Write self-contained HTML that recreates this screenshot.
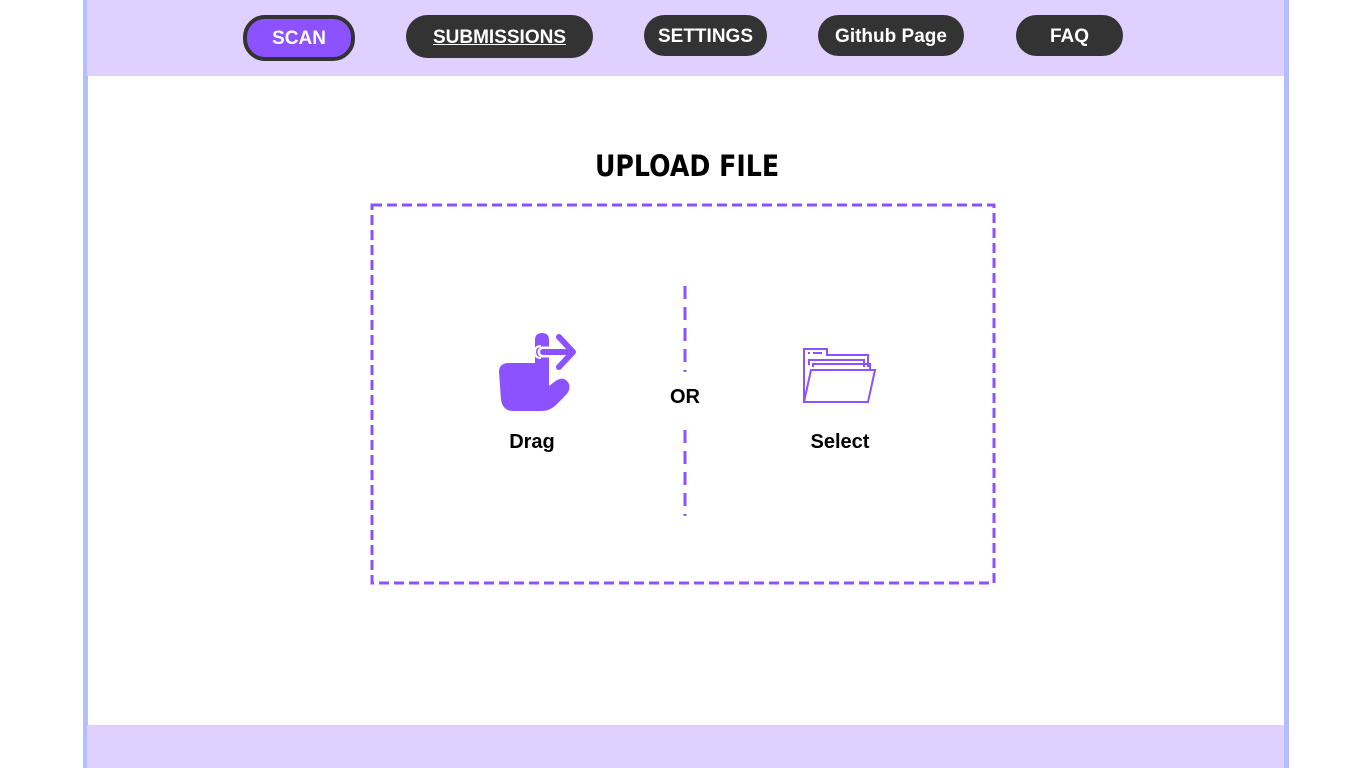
<!DOCTYPE html>
<html><head><style>
*{margin:0;padding:0;box-sizing:border-box}
body{width:1366px;height:768px;background:#fff;position:relative;overflow:hidden;font-family:"Liberation Sans",sans-serif}
.bl{position:absolute;top:0;height:768px;width:5px;background:#b3bdff}
.top{position:absolute;left:87px;width:1197px;top:0;height:76px;background:#e0d0ff}
.bot{position:absolute;left:87px;width:1197px;top:725px;height:43px;background:#e0d0ff}
.btn{position:absolute;background:#333;color:#fff;font-weight:bold;font-size:19px;border-radius:22px;display:flex;align-items:center;justify-content:center;padding-top:2px}
.t{position:absolute;font-weight:bold;font-size:20px;color:#000;text-align:center}
</style></head><body>
<div class="bl" style="left:83px"></div>
<div class="bl" style="left:1284px"></div>
<div class="top"></div>
<div class="bot"></div>
<div class="btn" style="left:243px;top:15px;width:112px;height:46px;background:#8c52ff;border:4px solid #333">SCAN</div>
<div class="btn" style="left:406px;top:15px;width:187px;height:43px;text-decoration:underline">SUBMISSIONS</div>
<div class="btn" style="left:644px;top:15px;width:123px;height:41px">SETTINGS</div>
<div class="btn" style="left:818px;top:15px;width:146px;height:41px">Github Page</div>
<div class="btn" style="left:1016px;top:15px;width:107px;height:41px">FAQ</div>
<div class="t" style="left:487px;top:149px;width:400px;font-size:29px;font-family:'DejaVu Sans',sans-serif;font-weight:600;transform:scaleX(0.87)">UPLOAD FILE</div>
<svg style="position:absolute;left:0;top:0" width="1366" height="768">
<rect x="372" y="205" width="622" height="378" fill="none" stroke="#8c52ff" stroke-width="3" stroke-dasharray="10 5"/>
<path d="M685 286 V372 M685 430 V516" stroke="#8c52ff" stroke-width="3" stroke-dasharray="13 8"/>
</svg>
<div class="t" style="left:645px;top:386px;width:80px">OR</div>
<div class="t" style="left:482px;top:431px;width:100px">Drag</div>
<div class="t" style="left:790px;top:431px;width:100px">Select</div>
<svg style="position:absolute;left:495px;top:330px" width="86" height="84" viewBox="0 0 86 84">
<path d="M40 10 Q40 3 47 3 Q54 3 54 10 V56 L62 50 Q70 46 74 54 Q76 60 70 66 L60 76 Q54 81 46 81 H18 Q8 81 6 70 L4 42 Q4 33 14 33 H40 Z" fill="#8c52ff"/>
<path d="M48 22 H76 M64 7 L78 22 L64 37" stroke="#fff" stroke-width="11" fill="none" stroke-linecap="round" stroke-linejoin="round"/>
<path d="M48 22 H76 M64 7 L78 22 L64 37" stroke="#8c52ff" stroke-width="6" fill="none" stroke-linecap="round" stroke-linejoin="round"/>
<path d="M46 16 Q40 16 40 22 Q40 28 46 28" stroke="#fff" stroke-width="2" fill="none"/>
</svg>
<svg style="position:absolute;left:800px;top:345px" width="80" height="62" viewBox="0 0 80 62">
<g fill="none" stroke="#8c52ff" stroke-width="2">
<path d="M4 57 V4 H27 V10 H68 V22"/>
<path d="M9 20 V15 H64 V22"/>
<path d="M13 22 V19 H70 V25"/>
<path d="M4 57 L11 25 H75 L68 57 Z"/>
<path d="M8 8 H10 M13 8 H22"/>
</g>
</svg>
</body></html>
